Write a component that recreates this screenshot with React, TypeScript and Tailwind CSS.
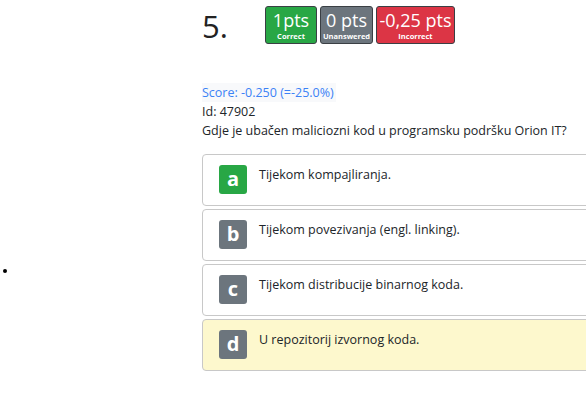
import React from 'react';

type Option = { letter: string; text: string; color: string; bg: string };

const options: Option[] = [
  { letter: 'a', text: 'Tijekom kompajliranja.', color: 'bg-[#28a745]', bg: 'bg-white' },
  { letter: 'b', text: 'Tijekom povezivanja (engl. linking).', color: 'bg-[#6c757d]', bg: 'bg-white' },
  { letter: 'c', text: 'Tijekom distribucije binarnog koda.', color: 'bg-[#6c757d]', bg: 'bg-white' },
  { letter: 'd', text: 'U repozitorij izvornog koda.', color: 'bg-[#6c757d]', bg: 'bg-[#fdf8cd]' },
];

const Badge: React.FC<{ value: string; label: string; color: string; width: string }> = ({
  value,
  label,
  color,
  width,
}) => (
  <div
    className={`${color} ${width} h-[38px] rounded-[3px] border border-[#3a3f44] flex flex-col items-center justify-center text-white`}
  >
    <span className="text-[18px] leading-[22px]">{value}</span>
    <span className="text-[7.5px] leading-[10px] font-bold">{label}</span>
  </div>
);

export default function App() {
  return (
    <div className="w-[586px] h-[401px] overflow-hidden bg-white flex font-['Open_Sans',sans-serif] text-[#212529]">
      <div className="w-[202px] shrink-0 pl-[3px] pt-[269px]">
        <div className="w-[4px] h-[4px] rounded-full bg-black" />
      </div>
      <div className="w-[420px] shrink-0">
        <div className="flex items-start pt-[6px]">
          <div className="w-[63px] pt-[1px] text-[31px] leading-[38px] text-[#222]">5.</div>
          <div className="flex gap-[3px]">
            <Badge value="1pts" label="Correct" color="bg-[#28a745]" width="w-[52px]" />
            <Badge value="0 pts" label="Unanswered" color="bg-[#6c757d]" width="w-[53px]" />
            <Badge value="-0,25 pts" label="Incorrect" color="bg-[#dc3545]" width="w-[79px]" />
          </div>
        </div>
        <div className="mt-[38px] text-[12.5px] leading-[19px]">
          <div className="text-[#3b82f6] bg-[#f8f9fb] inline-block pr-[2px]">Score: -0.250 (=-25.0%)</div>
          <div>Id: 47902</div>
          <div>Gdje je ubačen maliciozni kod u programsku podršku Orion IT?</div>
        </div>
        <div className="mt-[14px] flex flex-col gap-[3px]">
          {options.map((o) => (
            <div
              key={o.letter}
              className={`${o.bg} h-[52px] border border-[#c8c8c8] rounded-[4px] flex items-start pl-[16px] pt-[10px]`}
            >
              <div
                className={`${o.color} w-[28px] h-[29px] rounded-[3px] text-white text-[20px] font-bold flex items-center justify-center leading-none pb-[2px]`}
              >
                {o.letter}
              </div>
              <div className="ml-[12px] text-[12.5px] leading-[19px]">{o.text}</div>
            </div>
          ))}
        </div>
      </div>
    </div>
  );
}
